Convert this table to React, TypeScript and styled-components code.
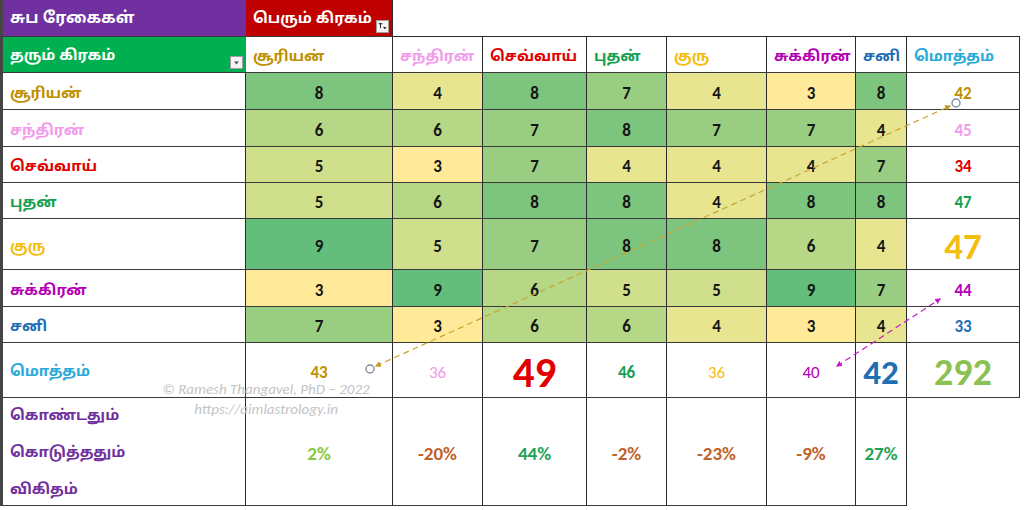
import React from "react";
import styled, { createGlobalStyle } from "styled-components";

const Global = createGlobalStyle`
  html, body { margin: 0; padding: 0; background: #ffffff; }
  #root { width: 1024px; height: 510px; }
`;

const TAMIL = `"Noto Sans Tamil", "Lohit Tamil", "Noto Sans", sans-serif`;
const NUM = `Carlito, Lato, "Open Sans", sans-serif`;

const Page = styled.div`
  position: relative;
  width: 1024px;
  height: 510px;
  overflow: hidden;
  background: #ffffff;
`;

const Sheet = styled.div`
  display: grid;
  grid-template-columns: 246px 147px 90px 104px 80px 100px 89px 51px 113px;
  grid-template-rows: 37px 36px 37px 37px 36px 36px 51px 37px 36px 55px 108px;
`;

type CellProps = {
  $bg?: string;
  $left?: boolean;
  $right?: boolean;
  $bottom?: boolean;
  $align?: "left" | "center";
  $drop?: number;
};

const Cell = styled.div<CellProps>`
  box-sizing: border-box;
  position: relative;
  display: flex;
  align-items: center;
  justify-content: ${(p) => (p.$align === "left" ? "flex-start" : "center")};
  padding: ${(p) => `${p.$drop ?? 3}px 0 0 ${p.$align === "left" ? 7 : 0}px`};
  background: ${(p) => p.$bg || "#ffffff"};
  border-left: ${(p) => (p.$left ? "3px solid #454545" : "none")};
  border-right: ${(p) => (p.$right === false ? "none" : "1px solid #2b2b2b")};
  border-bottom: ${(p) => (p.$bottom === false ? "none" : "1px solid #3a3a3a")};
`;

const Blank = styled.div<{ $line?: boolean }>`
  box-sizing: border-box;
  border-bottom: ${(p) => (p.$line ? "1px solid #2b2b2b" : "none")};
`;

const TamilText = styled.span<{ $color: string; $size?: number }>`
  font-family: ${TAMIL};
  font-weight: 700;
  font-size: ${(p) => p.$size ?? 15}px;
  color: ${(p) => p.$color};
  white-space: nowrap;
`;

const Num = styled.span<{ $color?: string; $size?: number; $weight?: number }>`
  font-family: ${NUM};
  font-weight: ${(p) => p.$weight ?? 700};
  font-size: ${(p) => p.$size ?? 17}px;
  color: ${(p) => p.$color ?? "#141414"};
  line-height: 1;
`;

const LabelStack = styled.div`
  align-self: flex-start;
  display: flex;
  flex-direction: column;
`;

const StackLine = styled.div`
  height: 37px;
  display: flex;
  align-items: center;
`;

const FilterBtn = styled.div`
  position: absolute;
  right: 3px;
  bottom: 3px;
  width: 13px;
  height: 13px;
  box-sizing: border-box;
  background: #f4f4f4;
  border: 1px solid #a0a0a0;
  display: flex;
  align-items: center;
  justify-content: center;
`;

const Watermark = styled.div`
  position: absolute;
  left: 158px;
  top: 379px;
  width: 216px;
  display: flex;
  flex-direction: column;
  align-items: center;
  font-family: Carlito, Lato, sans-serif;
  font-style: italic;
  font-size: 15px;
  line-height: 20px;
  color: #c4c4c4;
  pointer-events: none;
  white-space: nowrap;
`;

const Overlay = styled.svg`
  position: absolute;
  left: 0;
  top: 0;
  pointer-events: none;
`;

const scale: Record<number, string> = {
  9: "#63BE7B",
  8: "#7DC57E",
  7: "#99CE82",
  6: "#B5D786",
  5: "#CFDF8B",
  4: "#E7E590",
  3: "#FEEA98",
};

const planets = [
  { name: "சூரியன்", color: "#BF9000" },
  { name: "சந்திரன்", color: "#F29BEA" },
  { name: "செவ்வாய்", color: "#E00000" },
  { name: "புதன்", color: "#14A050" },
  { name: "குரு", color: "#F5BD0E" },
  { name: "சுக்கிரன்", color: "#B400B4" },
  { name: "சனி", color: "#1E6EB4" },
];

const grid = [
  [8, 4, 8, 7, 4, 3, 8],
  [6, 6, 7, 8, 7, 7, 4],
  [5, 3, 7, 4, 4, 4, 7],
  [5, 6, 8, 8, 4, 8, 8],
  [9, 5, 7, 8, 8, 6, 4],
  [3, 9, 6, 5, 5, 9, 7],
  [7, 3, 6, 6, 4, 3, 4],
];

const rowTotals = [
  { v: 42, size: 17 },
  { v: 45, size: 17 },
  { v: 34, size: 17 },
  { v: 47, size: 17 },
  { v: 47, size: 37 },
  { v: 44, size: 17 },
  { v: 33, size: 17 },
];

const colTotals = [
  { v: 43, size: 17, w: 700 },
  { v: 36, size: 17, w: 400 },
  { v: 49, size: 43, w: 700 },
  { v: 46, size: 17, w: 700 },
  { v: 36, size: 17, w: 400 },
  { v: 40, size: 17, w: 400 },
  { v: 42, size: 35, w: 700 },
];

const ratios = [
  { t: "2%", c: "#8CC63F" },
  { t: "-20%", c: "#C0622A" },
  { t: "44%", c: "#1FA355" },
  { t: "-2%", c: "#C0622A" },
  { t: "-23%", c: "#C0622A" },
  { t: "-9%", c: "#C0622A" },
  { t: "27%", c: "#1FA355" },
];

const FilterIcon = () => (
  <svg width="9" height="9" viewBox="0 0 9 9">
    <path d="M0.5 1 L4.5 1 L3 3 L3 6 L2 6 L2 3 Z" fill="#333" />
    <path d="M5 5 L8.5 5 L6.75 7.5 Z" fill="#333" />
  </svg>
);

const DropIcon = () => (
  <svg width="9" height="9" viewBox="0 0 9 9">
    <path d="M2 3.5 L7 3.5 L4.5 6.5 Z" fill="#555" />
  </svg>
);

const Arrows = () => (
  <Overlay width="1024" height="510" viewBox="0 0 1024 510">
    <defs>
      <marker id="headGold" viewBox="0 0 10 10" refX="8" refY="5" markerWidth="5" markerHeight="5" orient="auto-start-reverse">
        <path d="M0 0 L10 5 L0 10 Z" fill="#C09A1E" />
      </marker>
      <marker id="headPink" viewBox="0 0 10 10" refX="8" refY="5" markerWidth="5" markerHeight="5" orient="auto-start-reverse">
        <path d="M0 0 L10 5 L0 10 Z" fill="#C21BC8" />
      </marker>
    </defs>
    <line
      x1="376" y1="366" x2="950" y2="106"
      stroke="#C9A530" strokeWidth="1.2" strokeDasharray="6 4"
      markerStart="url(#headGold)" markerEnd="url(#headGold)"
    />
    <circle cx="956" cy="103" r="4" fill="#ffffff" stroke="#7f8ea0" strokeWidth="1.4" />
    <circle cx="370" cy="369" r="4" fill="#ffffff" stroke="#7f8ea0" strokeWidth="1.4" />
    <line
      x1="837" y1="366" x2="940" y2="299"
      stroke="#C21BC8" strokeWidth="1.2" strokeDasharray="6 4"
      markerStart="url(#headPink)" markerEnd="url(#headPink)"
    />
  </Overlay>
);

export default function App() {
  return (
    <Page>
      <Global />
      <Sheet>
        {/* header row 1 */}
        <Cell $left $align="left" $bg="#7030A0" $right={false} $drop={2}>
          <TamilText $color="#ffffff" $size={16}>சுப ரேகைகள்</TamilText>
        </Cell>
        <Cell $align="left" $bg="#C00000" $drop={2}>
          <TamilText $color="#ffffff">பெரும் கிரகம்</TamilText>
          <FilterBtn>
            <FilterIcon />
          </FilterBtn>
        </Cell>
        {Array.from({ length: 7 }).map((_, i) => (
          <Blank key={`b${i}`} $line />
        ))}

        {/* header row 2 */}
        <Cell $left $align="left" $bg="#00B050" $right={false} $drop={4}>
          <TamilText $color="#ffffff">தரும் கிரகம்</TamilText>
          <FilterBtn>
            <DropIcon />
          </FilterBtn>
        </Cell>
        {planets.map((p) => (
          <Cell key={`h${p.name}`} $align="left" $drop={5}>
            <TamilText $color={p.color}>{p.name}</TamilText>
          </Cell>
        ))}
        <Cell $align="left" $drop={5}>
          <TamilText $color="#27A9DA">மொத்தம்</TamilText>
        </Cell>

        {/* data rows */}
        {planets.map((p, r) => (
          <React.Fragment key={`r${r}`}>
            <Cell $left $align="left" $drop={6}>
              <TamilText $color={p.color}>{p.name}</TamilText>
            </Cell>
            {grid[r].map((v, c) => (
              <Cell key={`c${r}-${c}`} $bg={scale[v]} $drop={4}>
                <Num>{v}</Num>
              </Cell>
            ))}
            <Cell $drop={4}>
              <Num $color={p.color} $size={rowTotals[r].size}>
                {rowTotals[r].v}
              </Num>
            </Cell>
          </React.Fragment>
        ))}

        {/* totals row */}
        <Cell $left $align="left" $drop={4}>
          <TamilText $color="#27A9DA">மொத்தம்</TamilText>
        </Cell>
        {colTotals.map((t, c) => (
          <Cell key={`t${c}`} $drop={4}>
            <Num $color={planets[c].color} $size={t.size} $weight={t.w}>
              {t.v}
            </Num>
          </Cell>
        ))}
        <Cell $drop={4}>
          <Num $color="#8CC152" $size={38}>
            292
          </Num>
        </Cell>

        {/* ratio row */}
        <Cell $left $align="left" $drop={0}>
          <LabelStack>
            <StackLine>
              <TamilText $color="#7030A0">கொண்டதும்</TamilText>
            </StackLine>
            <StackLine>
              <TamilText $color="#7030A0">கொடுத்ததும்</TamilText>
            </StackLine>
            <StackLine>
              <TamilText $color="#7030A0">விகிதம்</TamilText>
            </StackLine>
          </LabelStack>
        </Cell>
        {ratios.map((r, i) => (
          <Cell key={`p${i}`} $drop={3}>
            <Num $color={r.c} $size={19}>
              {r.t}
            </Num>
          </Cell>
        ))}
        <Blank />
      </Sheet>

      <Watermark>
        <span>© Ramesh Thangavel, PhD – 2022</span>
        <span>https://aimlastrology.in</span>
      </Watermark>

      <Arrows />
    </Page>
  );
}
